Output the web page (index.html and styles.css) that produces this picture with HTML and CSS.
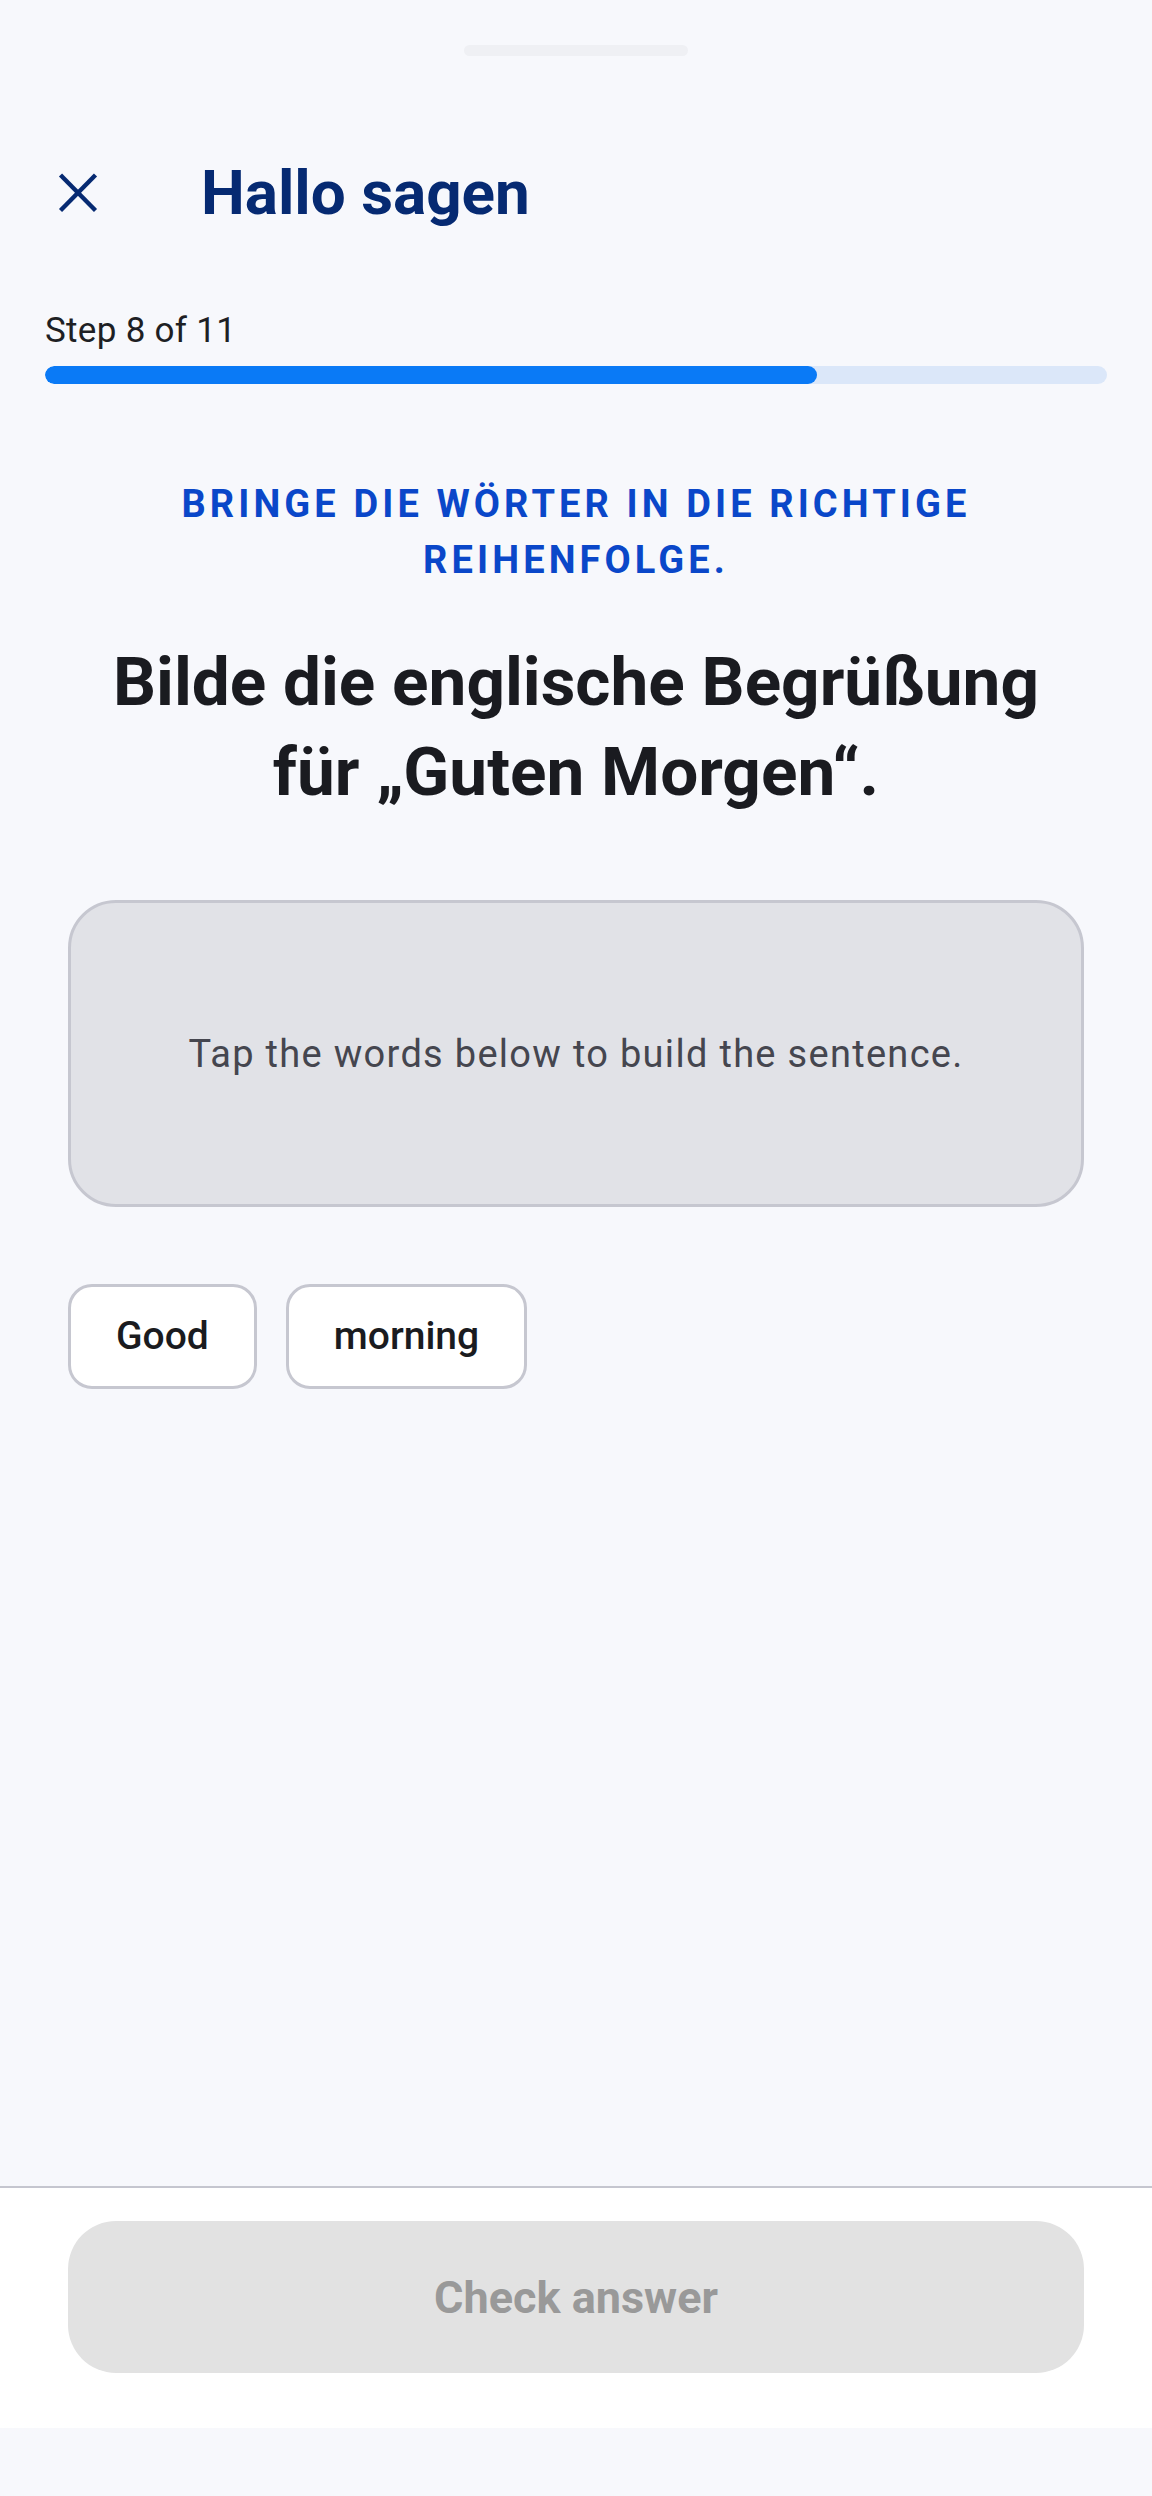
FILE: index.html
```html
<!DOCTYPE html>
<html lang="de">
<head>
  <meta charset="UTF-8" />
  <meta name="viewport" content="width=device-width, initial-scale=1.0"/>
  <title>Hallo sagen</title>
  <link rel="stylesheet" href="styles.css">
</head>
<body>

  <div class="app">
    <main class="main">
      <div class="handle"></div>

      <header class="header">
        <button class="close-btn" aria-label="Schließen">
          <svg width="40" height="40" viewBox="0 0 40 40">
            <line x1="2.5" y1="2" x2="37.5" y2="37.5" />
            <line x1="37.5" y1="2" x2="2.5" y2="37.5" />
          </svg>
        </button>
        <h1 class="title">Hallo sagen</h1>
      </header>

      <div class="progress">
        <div class="step-label">Step 8 of 11</div>
        <div class="progress-bar">
          <div class="progress-fill" style="width: 72.7%"></div>
        </div>
      </div>

      <section class="exercise">
        <p class="instruction">Bringe die Wörter in die richtige Reihenfolge.</p>
        <h2 class="question">Bilde die englische Begrüßung für „Guten Morgen“.</h2>

        <div class="answer-box">
          <span class="answer-hint">Tap the words below to build the sentence.</span>
        </div>

        <div class="word-bank">
          <button class="word-chip">Good</button>
          <button class="word-chip">morning</button>
        </div>
      </section>
    </main>

    <footer class="footer">
      <button class="check-btn" disabled>Check answer</button>
    </footer>
    <div class="nav-space"></div>
  </div>

</body>
</html>
```

FILE: styles.css
```css
body {
  margin: 0;
  background-color: #f7f8fc;
  font-family: Roboto, "Noto Sans", sans-serif;
}

.app {
  min-height: 100vh;
  display: flex;
  flex-direction: column;
}

.main {
  flex: 1;
  display: flex;
  flex-direction: column;
}

.handle {
  width: 224px;
  height: 11px;
  margin: 45px auto 0;
  border-radius: 6px;
  background: #eff0f4;
}

.header {
  display: flex;
  align-items: center;
  height: 76px;
  margin-top: 99px;
  padding-left: 58px;
  gap: 103px;
}

.close-btn {
  width: 40px;
  height: 40px;
  padding: 0;
  border: none;
  background: none;
  display: flex;
}

.close-btn svg line {
  stroke: #062a72;
  stroke-width: 4.4;
  stroke-linecap: butt;
}

.title {
  margin: 0;
  font-size: 62px;
  line-height: 76px;
  font-weight: 700;
  color: #062a72;
}

.progress {
  margin-top: 79px;
  padding: 0 45px;
}

.step-label {
  font-size: 35px;
  line-height: 42px;
  letter-spacing: 0.3px;
  color: #1e1f24;
}

.progress-bar {
  margin-top: 14px;
  height: 18px;
  border-radius: 9px;
  background: #dbe7f9;
  overflow: hidden;
}

.progress-fill {
  height: 100%;
  border-radius: 9px;
  background: #0a7af6;
}

.exercise {
  padding: 0 68px;
}

.instruction {
  margin: 92px 0 0;
  text-align: center;
  text-transform: uppercase;
  font-size: 38px;
  line-height: 56px;
  font-weight: 700;
  letter-spacing: 4.1px;
  color: #0a47c9;
}

.question {
  margin: 49px 0 0;
  text-align: center;
  font-size: 67.5px;
  line-height: 90px;
  font-weight: 700;
  color: #1a1b20;
}

.answer-box {
  margin-top: 83px;
  height: 301px;
  border: 3px solid #c6c7d0;
  border-radius: 48px;
  background: #e1e2e7;
  display: flex;
  align-items: center;
  justify-content: center;
}

.answer-hint {
  font-size: 38px;
  line-height: 46px;
  letter-spacing: 1.3px;
  color: #45464f;
}

.word-bank {
  display: flex;
  flex-wrap: wrap;
  gap: 29px;
  margin-top: 77px;
}

.word-chip {
  height: 105px;
  padding: 0 45px;
  border: 3px solid #c6c7d0;
  border-radius: 24px;
  background: #fff;
  font-family: Roboto, sans-serif;
  font-size: 39px;
  line-height: 45px;
  font-weight: 500;
  color: #1a1b20;
}

.footer {
  background: #fff;
  border-top: 2px solid #c5c6cf;
  padding: 33px 68px 55px;
}

.check-btn {
  width: 100%;
  height: 152px;
  border: none;
  border-radius: 48px;
  background: #e2e2e2;
  font-family: Roboto, sans-serif;
  font-size: 45px;
  font-weight: 700;
  color: #999;
}

.nav-space {
  height: 68px;
  background: #f7f8fc;
}
```
